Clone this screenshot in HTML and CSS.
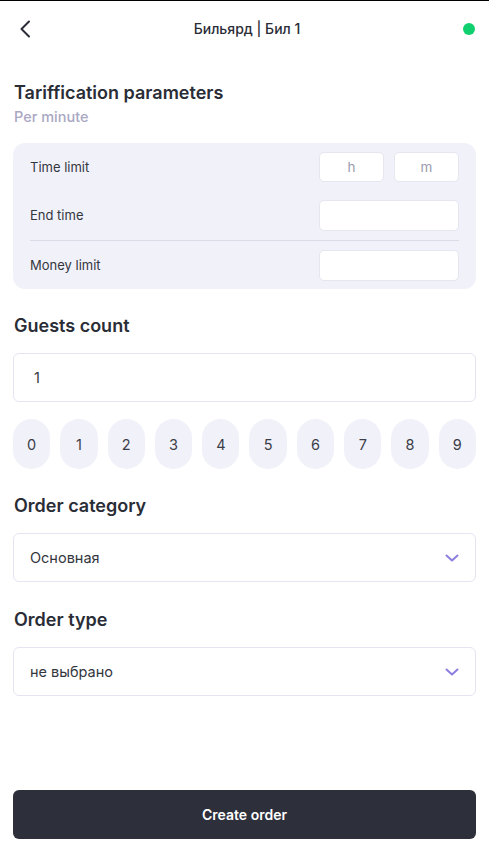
FILE: index.html
```html
<!DOCTYPE html>
<html lang="ru">
<head>
<meta charset="utf-8">
<title>Order</title>
<link rel="stylesheet" href="styles.css">
</head>
<body>
<div class="page">
  <header class="header">
    <button class="back" aria-label="Back">
      <svg width="12" height="18" viewBox="0 0 12 18"><path d="M10 1.5 L2.5 9 L10 16.5" fill="none" stroke="#2a2d36" stroke-width="2" stroke-linecap="round" stroke-linejoin="round"/></svg>
    </button>
    <div class="title">Бильярд | Бил 1</div>
    <span class="status"></span>
  </header>

  <main class="content">
    <h2 class="heading">Tariffication parameters</h2>
    <div class="sub">Per minute</div>

    <div class="panel">
      <div class="row">
        <span class="label">Time limit</span>
        <div class="pair">
          <div class="box small">h</div>
          <div class="box small">m</div>
        </div>
      </div>
      <div class="row row-gap">
        <span class="label">End time</span>
        <div class="box wide"></div>
      </div>
      <div class="divider"></div>
      <div class="row">
        <span class="label">Money limit</span>
        <div class="box wide"></div>
      </div>
    </div>

    <h2 class="heading section">Guests count</h2>
    <div class="field count">1</div>
    <div class="pills">
      <span class="pill">0</span><span class="pill">1</span><span class="pill">2</span><span class="pill">3</span><span class="pill">4</span><span class="pill">5</span><span class="pill">6</span><span class="pill">7</span><span class="pill">8</span><span class="pill">9</span>
    </div>

    <h2 class="heading section">Order category</h2>
    <div class="field select">
      <span>Основная</span>
      <svg width="14" height="8" viewBox="0 0 14 8"><path d="M1.5 1.5 L7 6.5 L12.5 1.5" fill="none" stroke="#8a7ee0" stroke-width="2" stroke-linecap="round" stroke-linejoin="round"/></svg>
    </div>

    <h2 class="heading section2">Order type</h2>
    <div class="field select">
      <span>не выбрано</span>
      <svg width="14" height="8" viewBox="0 0 14 8"><path d="M1.5 1.5 L7 6.5 L12.5 1.5" fill="none" stroke="#8a7ee0" stroke-width="2" stroke-linecap="round" stroke-linejoin="round"/></svg>
    </div>

    <button class="create">Create order</button>
  </main>
</div>
</body>
</html>
```

FILE: styles.css
```css
* { box-sizing: border-box; }
html, body { margin: 0; padding: 0; background: #fff; }
body {
  font-family: Inter, Roboto, "Noto Sans", Arial, sans-serif;
  color: #2a2d36;
  border-top: 1px solid #000;
}
.page {
  min-height: 852px;
  display: flex;
  flex-direction: column;
}
.header {
  height: 55px;
  display: flex;
  align-items: center;
  justify-content: space-between;
  padding: 0 14px 0 19px;
}
.back {
  background: none;
  border: 0;
  padding: 0;
  width: 40px;
  display: flex;
  align-items: center;
  height: 20px;
}
.title {
  font-size: 14px;
  font-weight: 500;
  color: #2a2d36;
}
.status {
  width: 40px;
  display: flex;
  justify-content: flex-end;
}
.status::after {
  content: "";
  width: 12px;
  height: 12px;
  border-radius: 50%;
  background: #10cf6f;
}
.content {
  flex: 1;
  display: flex;
  flex-direction: column;
  padding: 0 13px 14px;
}
.heading {
  margin: 26px 0 0 1px;
  font-size: 18px;
  line-height: 22px;
  font-weight: 600;
  color: #2a2d36;
}
.heading.section2 { margin-top: 27px; }
.sub {
  margin: 5px 0 0 1px;
  font-size: 14.5px;
  line-height: 16px;
  font-weight: 500;
  color: #aaa8c4;
}
.panel {
  margin-top: 18px;
  background: #f1f1fa;
  border-radius: 12px;
  padding: 9px 17px;
}
.row {
  height: 30px;
  display: flex;
  align-items: center;
  justify-content: space-between;
}
.row-gap { margin-top: 18px; margin-bottom: 10px; }
.label {
  font-size: 13px;
  color: #34363e;
}
.pair { display: flex; gap: 10px; }
.box {
  height: 30px;
  background: #fff;
  border: 1px solid #e6e6f1;
  border-radius: 5px;
  display: flex;
  align-items: center;
  justify-content: center;
  font-size: 13.5px;
  color: #9a9aae;
}
.box.small { width: 65px; }
.box.wide { width: 140px; height: 31px; }
.divider {
  height: 1px;
  background: #dcdce8;
  margin-bottom: 9px;
}
.field {
  margin-top: 16px;
  height: 49px;
  border: 1px solid #e5e4f2;
  border-radius: 6px;
  display: flex;
  align-items: center;
  padding: 0 16px 0 16px;
  font-size: 14.5px;
  color: #34363e;
}
.field.count { padding-left: 20px; }
.field.select { justify-content: space-between; }
.pills {
  margin-top: 17px;
  display: grid;
  grid-template-columns: repeat(10, 1fr);
  gap: 10px;
}
.pill {
  height: 50px;
  border-radius: 19px;
  background: #f1f1f9;
  display: flex;
  align-items: center;
  justify-content: center;
  font-size: 14.5px;
  color: #3c3e48;
}
.create {
  margin-top: auto;
  height: 49px;
  width: 100%;
  border: 0;
  border-radius: 6px;
  background: #2d303b;
  color: #fff;
  font-family: Inter, Roboto, "Noto Sans", Arial, sans-serif;
  font-size: 14px;
  font-weight: 600;
}
```
